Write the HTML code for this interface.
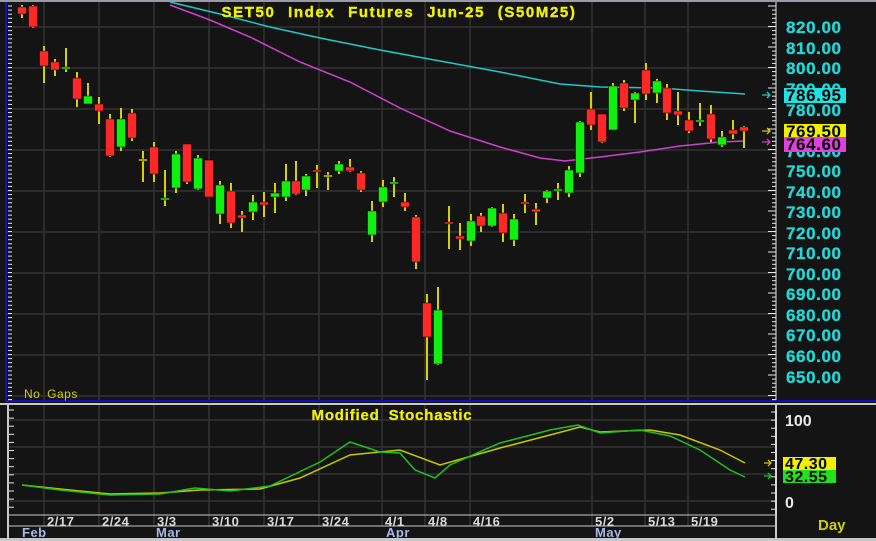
<!DOCTYPE html>
<html><head><meta charset="utf-8"><style>
html,body{margin:0;padding:0;background:#141414;width:876px;height:541px;overflow:hidden}
svg{display:block}
text{font-family:"Liberation Sans",Arial,sans-serif}
.b{font-weight:700 !important}
</style></head><body>
<svg id="s" width="876" height="541" viewBox="0 0 876 541" xmlns="http://www.w3.org/2000/svg">
<rect width="876" height="541" fill="#141414"/>
<rect x="0" y="0" width="876" height="2" fill="#9a9aa8"/>
<rect x="5" y="2" width="2" height="400" fill="#1010c0"/>
<rect x="5" y="400" width="871" height="2" fill="#1010c0"/>
<rect x="0" y="403" width="876" height="2" fill="#c8c8c8"/>
<rect x="0" y="538" width="876" height="3" fill="#c8c8c8"/>
<rect x="7" y="405" width="2" height="133" fill="#c8c8c8"/>
<rect x="775" y="405" width="2" height="133" fill="#c8c8c8"/>
<g id="grid" stroke="#333" stroke-width="1.5"></g>
<g id="ma" fill="none" stroke-width="1.5">
<polyline stroke="#20c8c8" points="170,2 220,14 270,27 320,38 380,50 440,61 500,72 540,80 560,84 600,87 660,88 700,91 745,94"/>
<polyline stroke="#d040d0" points="170,5 210,20 250,37 300,62 350,82 400,108 450,131 500,147 540,158 565,161 600,157 640,152 680,146 720,142 745,141"/>
</g>
<g id="c"></g>
<g fill="none" stroke-width="1.5">
<polyline stroke="#c8c800" points="22,485 60,489 110,494 160,493 200,490 260,489 300,478 350,455 400,450 440,465 500,448 550,435 580,427 600,432 650,430 680,435 720,450 745,463"/>
<polyline stroke="#20c020" points="22,485 60,490 110,495 160,494 195,488 230,491 270,486 320,462 350,442 380,452 400,453 415,470 435,478 450,465 500,443 550,430 578,425 600,433 640,430 670,436 700,450 730,470 745,477"/>
</g>
<text class="b" x="399" y="17" fill="#f0f000" font-size="15" font-weight="bold" letter-spacing="1.6" word-spacing="7" text-anchor="middle" stroke="#f0f000" stroke-width="0.4">SET50 Index Futures Jun-25 (S50M25)</text>
<text class="b" x="392" y="420" fill="#f0f000" font-size="15" font-weight="bold" letter-spacing="0.8" word-spacing="4" text-anchor="middle" stroke="#f0f000" stroke-width="0.3">Modified Stochastic</text>
<text x="24" y="398" fill="#d0d000" font-size="12" letter-spacing="0.5" word-spacing="3">No Gaps</text>
<g class="b" fill="#20d8d8" font-size="17" font-weight="bold" letter-spacing="0.6" stroke="#20d8d8" stroke-width="0.3">
<text x="786" y="33">820.00</text><text x="786" y="54">810.00</text><text x="786" y="74">800.00</text><text x="786" y="95">790.00</text>
<text x="786" y="116">780.00</text><text x="786" y="157">760.00</text><text x="786" y="177">750.00</text>
<text x="786" y="198">740.00</text><text x="786" y="218">730.00</text><text x="786" y="239">720.00</text><text x="786" y="259">710.00</text>
<text x="786" y="280">700.00</text><text x="786" y="300">690.00</text><text x="786" y="321">680.00</text><text x="786" y="341">670.00</text>
<text x="786" y="362">660.00</text><text x="786" y="383">650.00</text>
</g>
<g class="b" font-size="17" font-weight="bold" letter-spacing="0.6">
<rect x="784" y="88" width="62" height="15" fill="#20e0e0"/><text x="786" y="101" fill="#000">786.95</text>
<rect x="784" y="124" width="62" height="14" fill="#f0f000"/><text x="786" y="137" fill="#000">769.50</text>
<rect x="784" y="137" width="62" height="15" fill="#e040e0"/><text x="786" y="150" fill="#000">764.60</text>
</g>
<g stroke-width="1.3" fill="none">
<path d="M762 95h8M767 92l3 3-3 3" stroke="#20c8c8"/>
<path d="M762 131h8M767 128l3 3-3 3" stroke="#c8c800"/>
<path d="M762 142h8M767 139l3 3-3 3" stroke="#d040d0"/>
<path d="M764 463h7M768 460l3 3-3 3" stroke="#c8c800"/>
<path d="M764 476h7M768 473l3 3-3 3" stroke="#20c020"/>
</g>
<text class="b" x="785" y="426" fill="#e8e8e8" font-size="16" font-weight="bold">100</text>
<text class="b" x="785" y="508" fill="#e8e8e8" font-size="16" font-weight="bold">0</text>
<g class="b" font-size="16" font-weight="bold" letter-spacing="0.5">
<rect x="783" y="457" width="53" height="13" fill="#f0f000"/><text x="785" y="469" fill="#000">47.30</text>
<rect x="783" y="470" width="53" height="13" fill="#20e020"/><text x="785" y="482" fill="#000">32.55</text>
</g>
<text class="b" x="818" y="530" fill="#d0d000" font-size="15" font-weight="bold">Day</text>
<g stroke="#c8c8c8" stroke-width="1" fill="none">
<line x1="9" y1="515" x2="775" y2="515"/><line x1="9" y1="526" x2="775" y2="526"/>
</g>
<g class="b" fill="#d8d8d8" font-size="13" font-weight="bold" letter-spacing="0.5">
<text x="47" y="526">2/17</text><text x="102" y="526">2/24</text><text x="157" y="526">3/3</text><text x="212" y="526">3/10</text>
<text x="267" y="526">3/17</text><text x="322" y="526">3/24</text><text x="385" y="526">4/1</text><text x="428" y="526">4/8</text>
<text x="473" y="526">4/16</text><text x="595" y="526">5/2</text><text x="648" y="526">5/13</text><text x="691" y="526">5/19</text>
</g>
<g class="b" fill="#a8b8e8" font-size="13" font-weight="bold" letter-spacing="0.5">
<text x="22" y="537">Feb</text><text x="156" y="537">Mar</text><text x="386" y="537">Apr</text><text x="595" y="537">May</text>
</g>
<g id="ax" stroke="#e8e8e8" stroke-width="1"></g>
</svg>
<script>
var NS="http://www.w3.org/2000/svg";
function el(p,t,a){var e=document.createElementNS(NS,t);for(var k in a)e.setAttribute(k,a[k]);p.appendChild(e);return e;}
var g=document.getElementById('grid');
var vx=[44,99,154,209,264,319,382,425,470,592,645,688];
vx.forEach(function(x){el(g,'line',{x1:x,y1:2,x2:x,y2:400});el(g,'line',{x1:x,y1:405,x2:x,y2:526});});
for(var y=27;y<400;y+=41)el(g,'line',{x1:7,y1:y,x2:775,y2:y});
[420,447,474,501].forEach(function(y){el(g,'line',{x1:9,y1:y,x2:775,y2:y});});
var dl=document.getElementById('ax');
el(dl,'line',{x1:776,y1:2,x2:776,y2:400});
for(var y=6;y<400;y+=4.1)el(dl,'line',{x1:(Math.round((y-6)/4.1)%5==0?768:772),y1:y,x2:776,y2:y});
el(dl,'line',{x1:776,y1:410,x2:776,y2:515});
for(var y=412;y<512;y+=8.1)el(dl,'line',{x1:771,y1:y,x2:776,y2:y});
for(var y=6;y<400;y+=4.1)el(dl,'line',{x1:8,y1:y,x2:12,y2:y});
for(var y=410;y<512;y+=8.1)el(dl,'line',{x1:9,y1:y,x2:14,y2:y});
var C=[
[22,5,18,7,14,'r'],[33,5,28,6,27,'r'],[44,46,83,51,66,'r'],[55,59,76,62,70,'r'],[66,48,72,67,69,'g'],
[77,72,107,78,99,'r'],[88,83,104,96,104,'g'],[99,97,124,104,111,'r'],[110,114,157,119,156,'r'],[121,108,151,119,147,'g'],
[132,109,141,113,138,'r'],[143,151,182,159,161,'y'],[154,142,182,147,174,'r'],[165,170,206,198,200,'g'],[176,151,193,154,188,'g'],
[187,144,184,144,182,'r'],[198,155,190,158,189,'g'],[209,160,197,160,197,'r'],[220,181,224,185,214,'g'],[231,183,228,191,223,'r'],
[242,211,232,215,218,'r'],[253,195,220,202,212,'g'],[264,192,217,202,205,'r'],[275,183,213,193,197,'g'],[286,164,201,181,197,'g'],
[296,161,195,181,194,'r'],[306,174,196,176,190,'g'],[317,165,188,170,172,'r'],[328,172,190,175,177,'y'],[339,161,174,164,171,'g'],
[350,159,172,167,171,'r'],[361,171,192,173,190,'r'],[372,201,242,211,235,'g'],[383,180,207,187,202,'g'],[394,177,197,182,184,'g'],
[405,193,211,202,207,'r'],[416,215,269,217,262,'r'],[427,294,380,303,337,'r'],[438,287,365,310,364,'g'],[449,206,249,222,224,'r'],
[460,223,250,236,239,'r'],[471,214,246,221,241,'g'],[481,213,232,216,226,'r'],[492,207,227,208,226,'g'],[503,204,242,213,233,'r'],
[514,214,246,219,240,'g'],[525,194,213,202,204,'r'],[536,203,225,209,212,'r'],[547,190,203,191,198,'g'],[558,183,200,189,191,'g'],
[569,166,197,170,193,'g'],[580,121,177,122,173,'g'],[591,92,130,109,125,'r'],[602,114,143,114,142,'r'],[613,83,130,86,130,'g'],
[624,80,111,83,108,'r'],[635,92,123,93,100,'g'],[646,63,100,70,94,'r'],[657,79,103,81,93,'g'],[667,84,120,88,113,'r'],
[678,92,125,111,115,'r'],[689,112,133,120,131,'r'],[700,103,126,120,122,'g'],[711,105,142,114,139,'r'],[722,131,147,137,145,'g'],
[733,120,139,130,134,'r'],[744,126,148,127,131,'r']];
var cg=document.getElementById('c');
C.forEach(function(c){
 el(cg,'rect',{x:c[0]-1,y:c[1],width:2,height:c[2]-c[1],fill:'#d8d000'});
 var col=c[5]=='r'?'#ff2828':c[5]=='g'?'#10f010':'#d8d000';
 el(cg,'rect',{x:c[0]-4.5,y:c[3],width:9,height:Math.max(2,c[4]-c[3]),fill:col,stroke:'#000','stroke-width':0.5});
});
</script>
</body></html>
